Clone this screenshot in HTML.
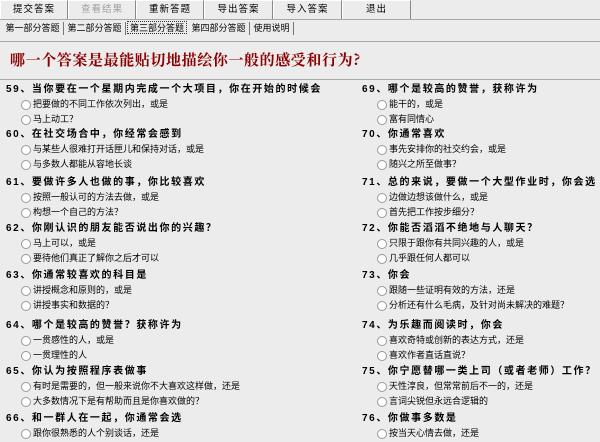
<!DOCTYPE html><html><head><meta charset="utf-8"><style>
body{margin:0;width:600px;height:442px;overflow:hidden;background:#ececec;font-family:"Liberation Sans","WenQuanYi Zen Hei","Noto Sans CJK SC",sans-serif;position:relative;color:#000}
.b{position:absolute;top:0;border:1px solid #888;border-top-color:#fff;border-left-color:#fff;background:#ececec;font-size:9.5px;line-height:18px;text-align:center;box-sizing:border-box;height:20px;letter-spacing:1px}
.t{position:absolute;top:22px;height:13px;font-size:9px;line-height:13px;border-right:1px solid #777;text-align:center;box-sizing:border-box;white-space:nowrap;overflow:hidden}
.hl{position:absolute;left:0;width:600px;height:1px;background:#a8a8a8}
.q{position:absolute;font-size:10px;font-weight:bold;letter-spacing:1.6px;white-space:nowrap;line-height:13px}
.o{position:absolute;font-size:9px;white-space:nowrap;line-height:13px}
.o::before{content:"";position:absolute;left:-12px;top:2px;width:8px;height:8px;border:1px solid #999;border-radius:50%;background:#fff}
</style></head><body>
<div class="b" style="left:0;width:68px">提交答案</div>
<div class="b" style="left:68px;width:68px;color:#a0a0a0">查看结果</div>
<div class="b" style="left:136px;width:68px">重新答题</div>
<div class="b" style="left:204px;width:69px">导出答案</div>
<div class="b" style="left:273px;width:69px">导入答案</div>
<div class="b" style="left:342px;width:69px">退出</div>
<div class="hl" style="top:19px"></div>
<div class="t" style="left:2px;width:62px">第一部分答题</div>
<div class="t" style="left:64px;width:62px">第二部分答题</div>
<div class="t" style="left:127px;width:60px;border:1px dotted #333;top:21px">第三部分答题</div>
<div class="t" style="left:188px;width:62px">第四部分答题</div>
<div class="t" style="left:250px;width:44px">使用说明</div>
<div class="hl" style="top:41px"></div>
<div style="position:absolute;left:10px;top:49px;font-size:15px;font-weight:bold;color:#8b0000;letter-spacing:0.6px;font-family:'Noto Serif CJK SC',serif">哪一个答案是最能贴切地描绘你一般的感受和行为?</div>
<div class="hl" style="top:79px"></div>

<div class="q" style="left:6px;top:83px">59、当你要在一个星期内完成一个大项目，你在开始的时候会</div>
<div class="o" style="left:33px;top:98px">把要做的不同工作依次列出，或是</div>
<div class="o" style="left:33px;top:113px">马上动工？</div>
<div class="q" style="left:6px;top:128px">60、在社交场合中，你经常会感到</div>
<div class="o" style="left:33px;top:143px">与某些人很难打开话匣儿和保持对话，或是</div>
<div class="o" style="left:33px;top:158px">与多数人都能从容地长谈</div>
<div class="q" style="left:6px;top:176px">61、要做许多人也做的事，你比较喜欢</div>
<div class="o" style="left:33px;top:191px">按照一般认可的方法去做，或是</div>
<div class="o" style="left:33px;top:206px">构想一个自己的方法？</div>
<div class="q" style="left:6px;top:222px">62、你刚认识的朋友能否说出你的兴趣？</div>
<div class="o" style="left:33px;top:237px">马上可以，或是</div>
<div class="o" style="left:33px;top:252px">要待他们真正了解你之后才可以</div>
<div class="q" style="left:6px;top:269px">63、你通常较喜欢的科目是</div>
<div class="o" style="left:33px;top:284px">讲授概念和原则的，或是</div>
<div class="o" style="left:33px;top:299px">讲授事实和数据的？</div>
<div class="q" style="left:6px;top:319px">64、哪个是较高的赞誉？获称许为</div>
<div class="o" style="left:33px;top:334px">一贯感性的人，或是</div>
<div class="o" style="left:33px;top:349px">一贯理性的人</div>
<div class="q" style="left:6px;top:365px">65、你认为按照程序表做事</div>
<div class="o" style="left:33px;top:380px">有时是需要的，但一般来说你不大喜欢这样做，还是</div>
<div class="o" style="left:33px;top:395px">大多数情况下是有帮助而且是你喜欢做的？</div>
<div class="q" style="left:6px;top:412px">66、和一群人在一起，你通常会选</div>
<div class="o" style="left:33px;top:427px">跟你很熟悉的人个别谈话，还是</div>

<div class="q" style="left:362px;top:83px">69、哪个是较高的赞誉，获称许为</div>
<div class="o" style="left:389px;top:98px">能干的，或是</div>
<div class="o" style="left:389px;top:113px">富有同情心</div>
<div class="q" style="left:362px;top:128px">70、你通常喜欢</div>
<div class="o" style="left:389px;top:143px">事先安排你的社交约会，或是</div>
<div class="o" style="left:389px;top:158px">随兴之所至做事？</div>
<div class="q" style="left:362px;top:176px">71、总的来说，要做一个大型作业时，你会选</div>
<div class="o" style="left:389px;top:191px">边做边想该做什么，或是</div>
<div class="o" style="left:389px;top:206px">首先把工作按步细分？</div>
<div class="q" style="left:362px;top:222px">72、你能否滔滔不绝地与人聊天？</div>
<div class="o" style="left:389px;top:237px">只限于跟你有共同兴趣的人，或是</div>
<div class="o" style="left:389px;top:252px">几乎跟任何人都可以</div>
<div class="q" style="left:362px;top:269px">73、你会</div>
<div class="o" style="left:389px;top:284px">跟随一些证明有效的方法，还是</div>
<div class="o" style="left:389px;top:299px">分析还有什么毛病，及针对尚未解决的难题？</div>
<div class="q" style="left:362px;top:319px">74、为乐趣而阅读时，你会</div>
<div class="o" style="left:389px;top:334px">喜欢奇特或创新的表达方式，还是</div>
<div class="o" style="left:389px;top:349px">喜欢作者直话直说？</div>
<div class="q" style="left:362px;top:365px">75、你宁愿替哪一类上司（或者老师）工作？</div>
<div class="o" style="left:389px;top:380px">天性淳良，但常常前后不一的，还是</div>
<div class="o" style="left:389px;top:395px">言词尖锐但永远合逻辑的</div>
<div class="q" style="left:362px;top:412px">76、你做事多数是</div>
<div class="o" style="left:389px;top:427px">按当天心情去做，还是</div>
</body></html>
